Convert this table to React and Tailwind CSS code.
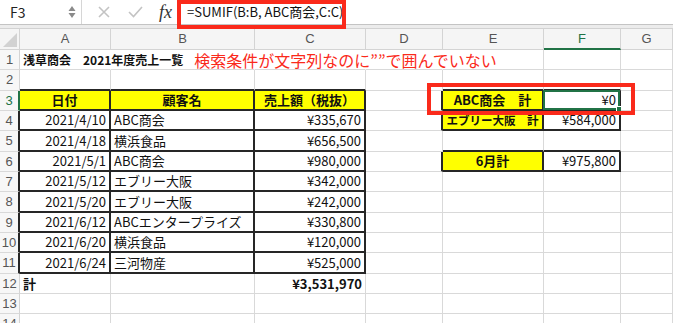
import React from 'react';

const COLS = ['A', 'B', 'C', 'D', 'E', 'F', 'G'];

const DATA = [
  ['2021/4/10', 'ABC商会', '¥335,670'],
  ['2021/4/18', '横浜食品', '¥656,500'],
  ['2021/5/1', 'ABC商会', '¥980,000'],
  ['2021/5/12', 'エブリー大阪', '¥342,000'],
  ['2021/5/20', 'エブリー大阪', '¥242,000'],
  ['2021/6/12', 'ABCエンタープライズ', '¥330,800'],
  ['2021/6/20', '横浜食品', '¥120,000'],
  ['2021/6/24', '三河物産', '¥525,000'],
];

// 罫線で囲まれた範囲 [行from, 行to, 列from, 列to]
const BOXES = [
  [3, 11, 0, 2],
  [3, 4, 4, 5],
  [6, 6, 4, 5],
];

const inBox = (r, c) =>
  BOXES.some(([r1, r2, c1, c2]) => r >= r1 && r <= r2 && c >= c1 && c <= c2);

function buildCells() {
  const cells = {};
  const put = (r, c, text, opts = {}) => { cells[`${r}-${c}`] = { text, ...opts }; };

  put(3, 0, '日付', { align: 'center', bold: true, yellow: true });
  put(3, 1, '顧客名', { align: 'center', bold: true, yellow: true });
  put(3, 2, '売上額（税抜）', { align: 'center', bold: true, yellow: true });

  DATA.forEach((row, i) => {
    put(4 + i, 0, row[0], { align: 'right' });
    put(4 + i, 1, row[1], { align: 'left' });
    put(4 + i, 2, row[2], { align: 'right' });
  });

  put(12, 0, '計', { align: 'left', bold: true });
  put(12, 2, '¥3,531,970', { align: 'right', bold: true });

  put(3, 4, 'ABC商会　計', { align: 'center', bold: true, yellow: true });
  put(3, 5, '¥0', { align: 'right' });
  put(4, 4, 'エブリー大阪　計', { align: 'center', bold: true, yellow: true, small: true });
  put(4, 5, '¥584,000', { align: 'right' });
  put(6, 4, '6月計', { align: 'center', bold: true, yellow: true });
  put(6, 5, '¥975,800', { align: 'right' });
  return cells;
}

const CELLS = buildCells();

function FormulaBar() {
  return (
    <div className="flex h-[25px] items-stretch border-b border-[#c4c4c4] bg-white">
      {/* 名前ボックス */}
      <div className="flex w-[81px] items-center justify-between pl-[10px] pr-[4px]">
        <span className="text-[14px] text-[#222]">F3</span>
        <svg width="10" height="16" viewBox="0 0 10 16">
          <path d="M5 2 L8.5 7 H1.5 Z" fill="#8a8a8a" />
          <path d="M5 14 L8.5 9 H1.5 Z" fill="#8a8a8a" />
        </svg>
      </div>
      <div className="w-px bg-[#d6d6d6]" />
      <div className="flex items-center">
        <svg className="ml-[16px]" width="12" height="12" viewBox="0 0 12 12">
          <path d="M1 1 L11 11 M11 1 L1 11" stroke="#c3c3c3" strokeWidth="1.6" fill="none" />
        </svg>
        <svg className="ml-[18px]" width="15" height="12" viewBox="0 0 15 12">
          <path d="M1 6 L5.5 10.5 L14 1" stroke="#c3c3c3" strokeWidth="1.6" fill="none" />
        </svg>
        <span className="ml-[16px] font-['Liberation_Serif',serif] text-[18px] italic text-[#333] leading-none">
          fx
        </span>
      </div>
      <div className="ml-[15px] flex items-center text-[13px] text-[#111]">
        =SUMIF(B:B, ABC商会,C:C)
      </div>
    </div>
  );
}

function HeaderRow() {
  return (
    <>
      <div className="relative h-[21px] border-r border-b border-[#d4d4d4] bg-[#f5f5f5]">
        <svg className="absolute right-[2px] bottom-[2px]" width="14" height="14" viewBox="0 0 14 14">
          <path d="M14 0 V14 H0 Z" fill="#d2d2d2" />
        </svg>
      </div>
      {COLS.map((c) => (
        <div
          key={c}
          className={`flex h-[21px] items-center justify-center border-r bg-[#f5f5f5] font-['Liberation_Sans',sans-serif] text-[13px] ${
            c === 'F'
              ? 'border-b-2 border-r-[#d4d4d4] border-b-[#217346] text-[#217346]'
              : 'border-b border-[#d4d4d4] text-[#555]'
          }`}
        >
          {c}
        </div>
      ))}
    </>
  );
}

function Cell({ r, c }) {
  const cell = CELLS[`${r}-${c}`];
  const rightBlack = inBox(r, c) || inBox(r, c + 1);
  const bottomBlack = inBox(r, c) || inBox(r + 1, c);
  // 1行目はタイトルがはみ出しているので縦線を消す
  const hideRight = r === 1 && c <= 3;

  const rightCls = rightBlack
    ? 'border-r-2 border-r-[#262626]'
    : hideRight
      ? 'border-r border-r-transparent'
      : 'border-r border-r-[#d9d9d9]';
  const bottomCls = bottomBlack
    ? 'border-b-2 border-b-[#262626]'
    : 'border-b border-b-[#d9d9d9]';

  const align = cell?.align === 'center'
    ? 'justify-center'
    : cell?.align === 'right'
      ? 'justify-end pr-[3px]'
      : 'justify-start pl-[3px]';

  return (
    <div
      className={`relative flex h-[20.33px] items-center whitespace-nowrap ${rightCls} ${bottomCls} ${
        cell?.yellow ? 'bg-[#ffff00] overflow-hidden' : ''
      } ${align} ${cell?.bold ? 'font-bold' : ''} ${cell?.small ? 'text-[11.5px]' : ''}`}
    >
      {r === 1 && c === 0 && (
        <div className="absolute left-[3px] top-0 bottom-0 flex items-center z-10">
          <span className="font-bold text-[12px]">浅草商会　2021年度売上一覧</span>
          <span className="ml-[11px] text-[16px] text-[#fa2a1b]">検索条件が文字列なのに””で囲んでいない</span>
        </div>
      )}
      {cell && <span>{cell.text}</span>}
      {r === 3 && c === 5 && (
        <>
          <div className="absolute -left-[1px] -top-[1px] -right-[1px] -bottom-[1px] border-2 border-[#217346]" />
          <div className="absolute -right-[3px] -bottom-[3px] h-[6px] w-[6px] border border-white bg-[#217346]" />
        </>
      )}
    </div>
  );
}

function RowHeader({ r }) {
  const selected = r === 3;
  const black = r >= 3 && r <= 11;
  return (
    <div
      className={`flex h-[20.33px] items-center justify-center border-b border-b-[#d9d9d9] bg-[#f7f7f7] font-['Liberation_Sans',sans-serif] text-[13px] ${
        selected
          ? 'border-r-2 border-r-[#217346] text-[#217346]'
          : black
            ? 'border-r-2 border-r-[#262626] text-[#555]'
            : 'border-r border-r-[#d4d4d4] text-[#555]'
      }`}
    >
      {r}
    </div>
  );
}

export default function App() {
  const rows = Array.from({ length: 14 }, (_, i) => i + 1);
  return (
    <div className="relative h-[323px] w-[673px] overflow-hidden bg-white font-['Noto_Sans_CJK_JP',sans-serif] text-[13px] text-[#111]">
      <FormulaBar />
      <div className="h-[4px] border-b border-[#d2d2d2] bg-[#ececec]" />

      <div className="grid grid-cols-[20px_91px_144px_111px_77px_101px_77px_1fr]">
        <HeaderRow />
        {rows.map((r) => (
          <React.Fragment key={r}>
            <RowHeader r={r} />
            {COLS.map((_, c) => (
              <Cell key={c} r={r} c={c} />
            ))}
          </React.Fragment>
        ))}
      </div>

      {/* 注釈の赤枠 */}
      <div className="pointer-events-none absolute left-[177px] top-0 h-[29px] w-[169px] border-4 border-[#fa2a1b]" />
      <div className="pointer-events-none absolute left-[427px] top-[83px] h-[32px] w-[208px] border-4 border-[#fa2a1b]" />
    </div>
  );
}
